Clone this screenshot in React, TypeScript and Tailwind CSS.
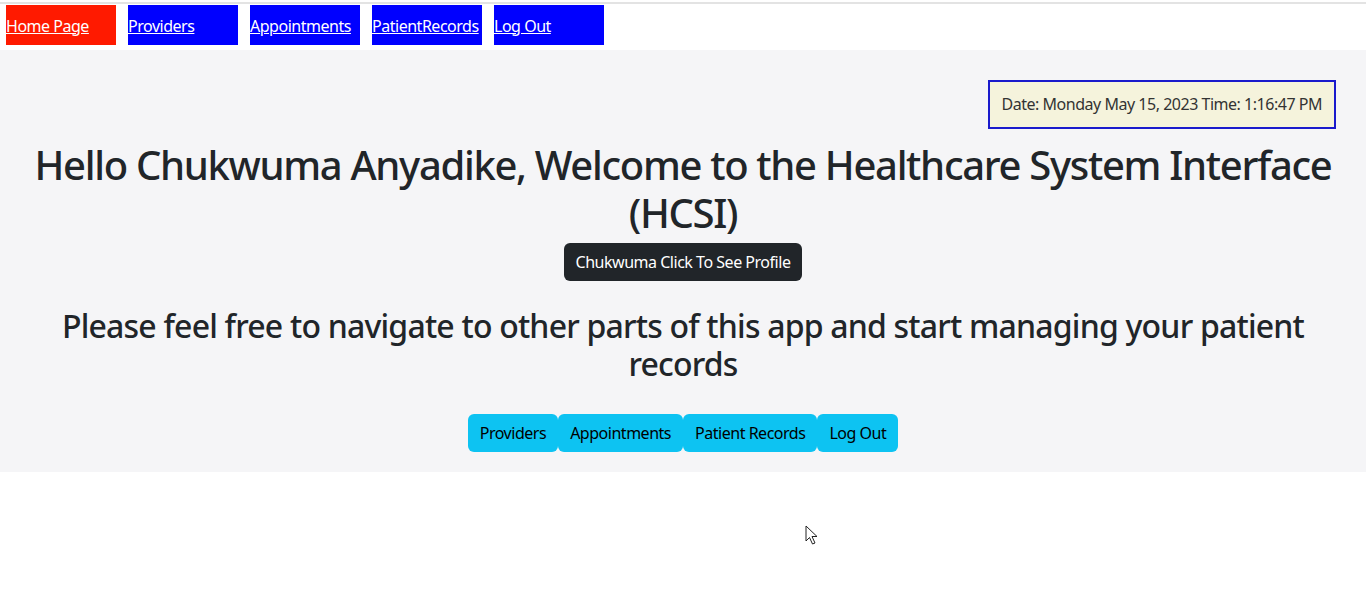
const navLinks = [
  { label: "Home Page", active: true },
  { label: "Providers" },
  { label: "Appointments" },
  { label: "PatientRecords" },
  { label: "Log Out" },
];

const quickLinks = ["Providers", "Appointments", "Patient Records", "Log Out"];

function Cursor() {
  return (
    <svg
      className="absolute left-[805px] top-[523px]"
      width="14"
      height="21"
      viewBox="0 0 14 21"
    >
      <path
        d="M1 1 L1 16 L4.5 12.5 L7.5 19 L10 18 L7 11.5 L12 11.5 Z"
        fill="#fff"
        stroke="#222"
        strokeWidth="1"
        strokeLinejoin="round"
      />
    </svg>
  );
}

export default function App() {
  return (
    <div className="relative h-[616px] bg-white font-['Noto_Sans',sans-serif] tracking-[-0.03em] text-[#212529]">
      <div className="mt-[2px] h-[5px] border-t-2 border-[#e3e3e3]" />
      <nav className="-mt-[2px] flex gap-3 pl-[6px]">
        {navLinks.map((link) => (
          <a
            key={link.label}
            href="#"
            className={`flex h-10 w-[110px] items-center pt-[1px] text-base leading-none text-white underline ${
              link.active ? "bg-[#ff1a00]" : "bg-[#0000ff]"
            }`}
          >
            {link.label}
          </a>
        ))}
      </nav>
      <main className="mt-[5px] flex flex-col items-center bg-[#f5f5f7] px-3 pb-5 pt-[30px]">
        <div className="mr-[18px] self-end border-2 border-[#1a1acc] bg-[#f5f3dc] px-3 py-[12px] text-base leading-[21px] text-[#333]">
          Date: Monday May 15, 2023 Time: 1:16:47 PM
        </div>
        <h1 className="mt-3 text-center text-[40px] font-medium leading-[48px] tracking-[-0.033em]">
          Hello Chukwuma Anyadike, Welcome to the Healthcare System Interface
          (HCSI)
        </h1>
        <button className="mt-[6px] rounded-md bg-[#212529] px-3 py-[6px] text-base leading-[26px] text-white">
          Chukwuma Click To See Profile
        </button>
        <h2 className="mt-[26px] px-8 text-center text-[32px] font-medium leading-[38px] tracking-[-0.025em]">
          Please feel free to navigate to other parts of this app and start
          managing your patient records
        </h2>
        <div className="mt-[31px] flex">
          {quickLinks.map((label) => (
            <button
              key={label}
              className="rounded-md bg-[#0dc3f2] px-3 py-[6px] text-base leading-[26px] text-black"
            >
              {label}
            </button>
          ))}
        </div>
      </main>
      <Cursor />
    </div>
  );
}
